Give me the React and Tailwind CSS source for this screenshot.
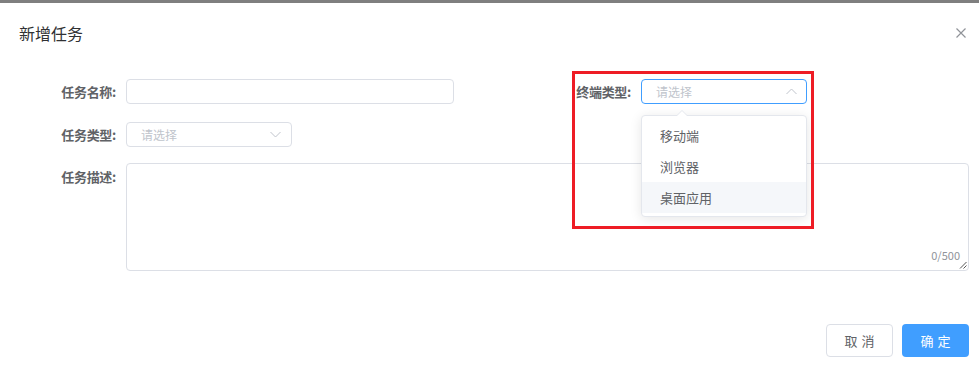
import React from "react";

const font = { fontFamily: '"Noto Sans CJK SC", "Noto Sans", sans-serif' };

function Chevron({ up }) {
  return (
    <svg width="11" height="7" viewBox="0 0 11 7" className="shrink-0">
      <path
        d={up ? "M0.5 6 L5.5 1 L10.5 6" : "M0.5 1 L5.5 6 L10.5 1"}
        fill="none"
        stroke="#c0c4cc"
        strokeWidth="1"
      />
    </svg>
  );
}

export default function App() {
  return (
    <div
      className="relative w-[979px] h-[370px] bg-white overflow-hidden text-[#606266]"
      style={font}
    >
      <div className="h-[3px] bg-[#7f7f7f]" />
      <div className="flex items-center justify-between h-[60px] pl-[19px] pr-[13px]">
        <span className="text-[16px] text-[#303133] leading-none">新增任务</span>
        <svg width="10" height="10" viewBox="0 0 10 10">
          <path d="M0.5 0.5 L9.5 9.5 M9.5 0.5 L0.5 9.5" stroke="#909399" strokeWidth="1.2" />
        </svg>
      </div>

      <div className="flex flex-col mt-[16px]">
        <div className="flex items-center h-[25px]">
          <div className="flex items-center w-[515px]">
            <label className="w-[126px] pr-[10px] text-right text-[13px] font-bold leading-none tracking-[-0.3px]">任务名称:</label>
            <div className="w-[328px] h-[25px] border border-[#dcdfe6] rounded-[4px]" />
          </div>
          <label className="w-[126px] pr-[10px] text-right text-[13px] font-bold leading-none tracking-[-0.3px]">终端类型:</label>
          <div className="w-[166px] h-[25px] border border-[#409eff] rounded-[4px] flex items-center justify-between pl-[14px] pr-[9px]">
            <span className="text-[12px] text-[#c0c4cc] leading-none">请选择</span>
            <Chevron up />
          </div>
        </div>

        <div className="flex items-center h-[25px] mt-[18px]">
          <label className="w-[126px] pr-[10px] text-right text-[13px] font-bold leading-none tracking-[-0.3px]">任务类型:</label>
          <div className="w-[166px] h-[25px] border border-[#dcdfe6] rounded-[4px] flex items-center justify-between pl-[14px] pr-[10px]">
            <span className="text-[12px] text-[#c0c4cc] leading-none">请选择</span>
            <Chevron />
          </div>
        </div>

        <div className="flex items-start mt-[16px]">
          <label className="w-[126px] pr-[10px] pt-[7px] text-right text-[13px] font-bold leading-none tracking-[-0.3px]">任务描述:</label>
          <div className="relative w-[843px] h-[108px] border border-[#dcdfe6] rounded-[4px]">
            <span className="absolute right-[8px] bottom-[9px] text-[11px] text-[#909399] leading-none">0/500</span>
            <svg className="absolute right-[1px] bottom-[1px]" width="8" height="8" viewBox="0 0 8 8">
              <path d="M7.5 1 L1 7.5 M7.5 4.5 L4.5 7.5" stroke="#555" strokeWidth="1" />
            </svg>
          </div>
        </div>

        <div className="flex justify-end gap-[9px] pr-[10px] mt-[53px]">
          <button className="w-[67px] h-[33px] border border-[#dcdfe6] rounded-[4px] bg-white text-[13px] text-[#606266] tracking-[4px] pl-[4px]">
            取消
          </button>
          <button className="w-[67px] h-[33px] rounded-[4px] bg-[#409eff] text-[13px] text-white tracking-[4px] pl-[4px]">
            确定
          </button>
        </div>
      </div>

      {/* dropdown */}
      <div className="absolute left-[641px] top-[115px] w-[166px] h-[102px] bg-white border border-[#e4e7ed] rounded-[4px] shadow-[0_2px_12px_0_rgba(0,0,0,0.1)] pt-[4px]">
        <div className="absolute -top-[6px] left-[34px] w-0 h-0 border-l-[6px] border-r-[6px] border-b-[6px] border-l-transparent border-r-transparent border-b-[#e4e7ed]" />
        <div className="absolute -top-[5px] left-[35px] w-0 h-0 border-l-[5px] border-r-[5px] border-b-[5px] border-l-transparent border-r-transparent border-b-white" />
        <div className="h-[31px] flex items-center pl-[18px] text-[13px]">移动端</div>
        <div className="h-[31px] flex items-center pl-[18px] text-[13px]">浏览器</div>
        <div className="h-[31px] flex items-center pl-[18px] text-[13px] bg-[#f5f7fa]">桌面应用</div>
      </div>

      {/* annotation */}
      <div className="absolute left-[572px] top-[71px] w-[242px] h-[158px] border-[3px] border-[#ee1c25] pointer-events-none" />
    </div>
  );
}
